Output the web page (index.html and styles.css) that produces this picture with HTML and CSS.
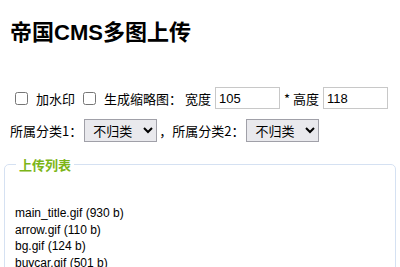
FILE: index.html
```html
<!DOCTYPE html>
<html lang="zh">
<head>
    <meta charset="UTF-8">
    <title>帝国CMS多图上传</title>
    <link rel="stylesheet" href="styles.css">
</head>
<body>
    <h1>帝国CMS多图上传</h1>
    <form id="uploadForm">
        <div class="form-row">
            <label><input type="checkbox" name="getmark"> 加水印</label>
            <label><input type="checkbox" name="getsmall"> 生成缩略图：</label>
            宽度 <input type="text" class="size" name="width" value="105">
            * 高度 <input type="text" class="size" name="height" value="118">
        </div>
        <div class="form-row">
            所属分类1：<select name="classid1"><option>不归类</option></select>，所属分类2：<select name="classid2"><option>不归类</option></select>
        </div>
        <fieldset class="upload-list">
            <legend>上传列表</legend>
            <ul id="fileList">
                <li>main_title.gif (930 b)</li>
                <li>arrow.gif (110 b)</li>
                <li>bg.gif (124 b)</li>
                <li>buycar.gif (501 b)</li>
            </ul>
        </fieldset>
    </form>
</body>
</html>
```

FILE: styles.css
```css
body {
    font-family: "Noto Sans CJK SC", "Liberation Sans", sans-serif;
    font-size: 13px;
    color: #000;
    margin: 0;
    padding: 0 10px;
}
h1 {
    font-family: "Liberation Sans", "Noto Sans CJK SC", sans-serif;
    font-size: 22px;
    font-weight: bold;
    margin: 0;
    padding: 20px 0 0 0;
    line-height: 26px;
    height: 67px;
}
.form-row {
    display: flex;
    align-items: center;
    margin-bottom: 10px;
    white-space: nowrap;
}
.form-row label {
    display: flex;
    align-items: center;
    margin-right: 3px;
}
input[type="checkbox"] {
    width: 13px;
    height: 13px;
    margin: 0 8px 0 5px;
}
input.size {
    width: 65px;
    height: 22px;
    box-sizing: border-box;
    border: 1px solid #c8c8c8;
    padding: 0 3px;
    font-family: "Liberation Sans", sans-serif;
    font-size: 13px;
    margin: 0 4px 0 4px;
}
select {
    width: 73px;
    height: 23px;
    margin: 0 2px 0 2px;
    padding: 0 4px;
    background: #e9e9ed;
    border: 1px solid #a0a0a8;
    border-radius: 0;
    font-family: "Noto Sans CJK SC", sans-serif;
    font-size: 13px;
}
.upload-list {
    margin: 13px -6px 0;
    padding: 0 10px;
    border: 1px solid #d5e1f2;
    border-radius: 5px;
    min-height: 120px;
}
.upload-list legend {
    color: #7cb518;
    font-weight: bold;
    padding: 0 3px;
    margin-left: 1px;
}
#fileList {
    list-style: none;
    margin: 31px 0 0;
    padding: 0;
    font-family: "Liberation Sans", sans-serif;
    font-size: 12px;
    line-height: 16.5px;
}
```
